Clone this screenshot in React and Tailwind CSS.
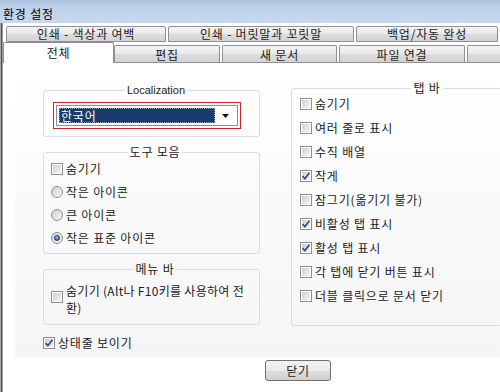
const backTabs = [
  { label: '인쇄 - 색상과 여백', cls: 'w-[160px]' },
  { label: '인쇄 - 머릿말과 꼬릿말', cls: 'w-[186px]' },
  { label: '백업/자동 완성', cls: 'w-[142px]' },
];

const frontTabs = [
  { label: '편집', cls: 'w-[106px]' },
  { label: '새 문서', cls: 'w-[115px]' },
  { label: '파일 연결', cls: 'w-[126px]' },
  { label: '', cls: 'w-[60px]' },
];

const tabBar = [
  { label: '숨기기', on: false },
  { label: '여러 줄로 표시', on: false },
  { label: '수직 배열', on: false },
  { label: '작게', on: true },
  { label: '잠그기(옮기기 불가)', on: false },
  { label: '비활성 탭 표시', on: true },
  { label: '활성 탭 표시', on: true },
  { label: '각 탭에 닫기 버튼 표시', on: false },
  { label: '더블 클릭으로 문서 닫기', on: false },
];

const tabGradient =
  'bg-[linear-gradient(#f4f4f4,#e9e9e9_50%,#dcdcdc_51%,#d4d4d4)]';

function Check({ on }) {
  return (
    <span className="relative flex size-[12px] shrink-0 border border-[#8f8f8f] bg-white p-px">
      <span className="flex-1 bg-[linear-gradient(135deg,#cdd0d5,#f5f5f5)]" />
      {on && (
        <svg className="absolute inset-0" width="10" height="10" viewBox="0 0 10 10">
          <path d="M1.6 5.2 L3.9 7.6 L8.4 1.8" fill="none" stroke="#3b4f8e" strokeWidth="1.8" />
        </svg>
      )}
    </span>
  );
}

function Radio({ on }) {
  return (
    <span className="flex size-[12px] shrink-0 items-center justify-center rounded-full border border-[#8f8f8f] bg-[linear-gradient(135deg,#cfd1d5,#f6f6f6)]">
      {on && (
        <span className="size-[6px] rounded-full border border-[#1c3f72] bg-[radial-gradient(circle_at_40%_35%,#a9cdf0,#2b64ab_75%)]" />
      )}
    </span>
  );
}

function Option({ box, children, className = '' }) {
  return (
    <div className={`flex items-center gap-[3px] ${className}`}>
      {box}
      <span>{children}</span>
    </div>
  );
}

function Group({ title, className = '', legendCls = '', children }) {
  return (
    <fieldset className={`rounded-[3px] border border-[#d5dfe5] ${className}`}>
      <legend className={`mx-auto px-[2px] leading-[14px] ${legendCls}`}>{title}</legend>
      {children}
    </fieldset>
  );
}

export default function App() {
  return (
    <div className="relative h-[392px] w-[500px] overflow-hidden bg-white font-['Noto_Sans_CJK_KR',sans-serif] text-[12px] leading-[14px] tracking-[0.8px] text-[#1b1b1b]">
      <div className="flex h-[23px] items-center bg-[linear-gradient(#aac2e0,#bed2ea_40%,#c6d8ee)] pl-[3px] pt-[5px] text-black">
        환경 설정
      </div>

      <div className="flex h-[369px]">
        <div className="w-[3px] bg-[linear-gradient(90deg,#a8a8a8_0_1px,#505050_1px_2px,#9c9c9c_2px)]" />

        <div className="flex min-w-0 flex-1 flex-col">
          <div className="mt-[3px] flex h-[16px] gap-[2px] pl-[3px]">
            {backTabs.map((t) => (
              <div
                key={t.label}
                className={`flex h-full shrink-0 items-center justify-center rounded-t-[2px] border border-[#8e9096] ${tabGradient} ${t.cls}`}
              >
                {t.label}
              </div>
            ))}
          </div>

          <div className="flex h-[20px] items-end">
            <div className="relative z-10 -mb-px flex h-[21px] w-[111px] shrink-0 items-center justify-center rounded-t-[2px] border border-b-0 border-[#8e9096] bg-white pb-[1px]">
              전체
            </div>
            <div className="flex gap-[2px]">
              {frontTabs.map((t, i) => (
                <div
                  key={i}
                  className={`flex h-[17px] shrink-0 items-center justify-center rounded-t-[2px] border border-b-0 border-[#8e9096] pt-[1px] ${tabGradient} ${t.cls}`}
                >
                  {t.label}
                </div>
              ))}
            </div>
          </div>

          <div className="flex h-[296px] border-t border-[#8e9096] pl-[12px]">
            <div className="flex flex-1 items-start gap-[31px] overflow-hidden bg-[linear-gradient(#ffffff,#f5f5f5)] pl-[28px]">
              <div className="mt-[20px] flex w-[217px] shrink-0 flex-col">
                <Group
                  title="Localization"
                  legendCls="font-['Liberation_Sans',sans-serif] text-[11px] tracking-normal"
                  className="pb-[7px] pl-[9px] pt-[5px]"
                >
                  <div className="w-[188px] border border-[#c8262c] p-[2px]">
                    <div className="flex h-[21px] border border-[#8c8f96] bg-white p-[2px]">
                      <div className="flex h-[15px] w-[156px] items-center border border-dotted border-[#8fa3bd] bg-[#183c6b] pl-px text-white">
                        한국어
                      </div>
                      <div className="flex flex-1 items-center justify-center">
                        <svg width="7" height="4" viewBox="0 0 7 4">
                          <path d="M0 0 H7 L3.5 4 Z" fill="#111" />
                        </svg>
                      </div>
                    </div>
                  </div>
                </Group>

                <Group title="도구 모음" className="mt-[8px] flex flex-col gap-[3px] pb-[5px] pl-[7px]">
                  <Option box={<Check />} className="h-[20px]">숨기기</Option>
                  <Option box={<Radio />} className="h-[20px]">작은 아이콘</Option>
                  <Option box={<Radio />} className="h-[20px]">큰 아이콘</Option>
                  <Option box={<Radio on />} className="h-[20px]">작은 표준 아이콘</Option>
                </Group>

                <Group title="메뉴 바" className="mt-[8px] pb-[8px] pl-[7px] pt-[6px]">
                  <div className="flex items-start gap-[3px]">
                    <span className="mt-[9px]">
                      <Check />
                    </span>
                    <span className="leading-[17px] tracking-[0.3px]">
                      숨기기 (Alt나 F10키를 사용하여 전
                      <br />
                      환)
                    </span>
                  </div>
                </Group>

                <Option box={<Check on />} className="mt-[8px] h-[20px]">
                  상태줄 보이기
                </Option>
              </div>

              <Group title="탭 바" className="mt-[18px] flex w-[264px] shrink-0 flex-col gap-[6px] pb-[20px] pl-[8px]">
                {tabBar.map((o) => (
                  <Option key={o.label} box={<Check on={o.on} />} className="h-[18px]">
                    {o.label}
                  </Option>
                ))}
              </Group>
            </div>
          </div>

          <button className="ml-[262px] mt-[2px] flex h-[21px] w-[66px] items-center justify-center rounded-[3px] border border-[#707070] bg-[linear-gradient(#f2f2f2,#ebebeb_50%,#dddddd_51%,#cfcfcf)] text-[#1b1b1b]">
            닫기
          </button>
        </div>
      </div>
    </div>
  );
}
